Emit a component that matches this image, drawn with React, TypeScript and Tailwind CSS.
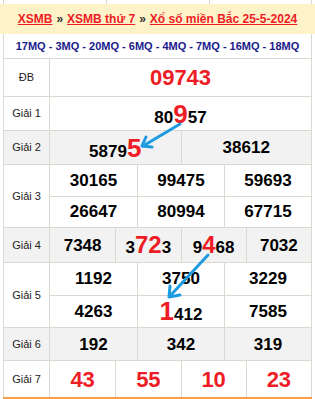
import React from "react";

const RED = "text-[#ee1c25]";

type Cell = React.ReactNode;

function Num({ children, big = false }: { children: React.ReactNode; big?: boolean }) {
  return (
    <span className={big ? `${RED} text-[26px] leading-none` : ""}>{children}</span>
  );
}

function Row({
  label,
  gray = false,
  h,
  children,
}: {
  label: string;
  gray?: boolean;
  h: string;
  children: React.ReactNode;
}) {
  return (
    <div className={`flex border-b border-[#dcd7d0] ${h} ${gray ? "bg-[#f2f2f2]" : "bg-white"}`}>
      <div className="flex w-[45px] shrink-0 items-center justify-center text-[11px] text-[#222]">
        {label}
      </div>
      <div className="flex flex-1 flex-col border-l border-[#dcd7d0]">{children}</div>
    </div>
  );
}

function Line({ cells, cls, className = "" }: { cells: Cell[]; cls: string; className?: string }) {
  return (
    <div className={`grid flex-1 ${cls} ${className}`}>
      {cells.map((c, i) => (
        <div
          key={i}
          className={`flex items-center justify-center text-[17px] font-bold text-black ${
            i > 0 ? "border-l border-[#dcd7d0]" : ""
          }`}
        >
          <span className="leading-none">{c}</span>
        </div>
      ))}
    </div>
  );
}

export default function App() {
  return (
    <div className="relative h-[399px] w-[315px] overflow-hidden bg-white font-['Liberation_Sans',Arial,sans-serif]">
      {/* tail of the table above */}
      <div className="mx-[3px] grid h-[4px] grid-cols-3 border-x border-[#dcd7d0]">
        <div />
        <div className="border-l border-[#dcd7d0]" />
        <div className="border-l border-[#dcd7d0]" />
      </div>

      <div className="flex h-[30px] items-center justify-center bg-[#fdf2c8] text-[12px] font-bold">
        <a className={`${RED} underline`}>XSMB</a>
        <span className="mx-[4px] text-[#333]">»</span>
        <a className={`${RED} underline`}>XSMB thứ 7</a>
        <span className="mx-[4px] text-[#333]">»</span>
        <a className={`${RED} underline`}>Xổ số miền Bắc 25-5-2024</a>
      </div>

      <div className="mx-[3px] border-x border-[#dcd7d0]">
        <div className="flex h-[25px] items-center justify-center border-b border-[#dcd7d0] text-[11px] font-bold text-[#1a1a8c]">
          17MQ - 3MQ - 20MQ - 6MQ - 4MQ - 7MQ - 16MQ - 18MQ
        </div>

        <Row label="ĐB" h="h-[38px]">
          <div className="flex flex-1 items-center justify-center text-[22px] font-bold text-[#ee1c25]">
            09743
          </div>
        </Row>

        <Row label="Giải 1" h="h-[34px]">
          <Line
            cls="grid-cols-1"
            cells={[
              <>
                80<Num big>9</Num>57
              </>,
            ]}
          />
        </Row>

        <Row label="Giải 2" gray h="h-[34px]">
          <Line
            cls="grid-cols-2"
            cells={[
              <>
                5879<Num big>5</Num>
              </>,
              "38612",
            ]}
          />
        </Row>

        <Row label="Giải 3" h="h-[63px]">
          <Line cls="grid-cols-3" className="border-b border-[#dcd7d0]" cells={["30165", "99475", "59693"]} />
          <Line cls="grid-cols-3" cells={["26647", "80994", "67715"]} />
        </Row>

        <Row label="Giải 4" gray h="h-[35px]">
          <Line
            cls="grid-cols-4"
            cells={[
              "7348",
              <>
                3<span className={`${RED} text-[24px] leading-none`}>72</span>3
              </>,
              <>
                9<span className={`${RED} text-[24px] leading-none`}>4</span>68
              </>,
              "7032",
            ]}
          />
        </Row>

        <Row label="Giải 5" h="h-[65px]">
          <Line cls="grid-cols-3" className="border-b border-[#dcd7d0]" cells={["1192", "3750", "3229"]} />
          <Line
            cls="grid-cols-3"
            cells={[
              "4263",
              <>
                <Num big>1</Num>412
              </>,
              "7585",
            ]}
          />
        </Row>

        <Row label="Giải 6" gray h="h-[33px]">
          <Line cls="grid-cols-3" cells={["192", "342", "319"]} />
        </Row>

        <div className="flex h-[36px] bg-white">
          <div className="flex w-[45px] shrink-0 items-center justify-center text-[11px] text-[#222]">
            Giải 7
          </div>
          <div className="grid flex-1 grid-cols-4 border-l border-[#dcd7d0]">
            {["43", "55", "10", "23"].map((n, i) => (
              <div
                key={n}
                className={`flex items-center justify-center text-[22px] font-bold text-[#ee1c25] ${
                  i > 0 ? "border-l border-[#dcd7d0]" : ""
                }`}
              >
                {n}
              </div>
            ))}
          </div>
        </div>
      </div>
      <div className="mx-[3px] h-[2px] bg-[#f5a04c]" />

      {/* hand-drawn arrows */}
      <svg className="pointer-events-none absolute left-0 top-0" width="315" height="399">
        <g stroke="#1e9be0" strokeWidth="3" strokeLinecap="round" strokeLinejoin="round" fill="none">
          <path d="M180 124 L143 146" />
          <path d="M146 137 L142 146 L152 147" />
          <path d="M208 255 L170 296" />
          <path d="M170 286 L169 297 L180 295" />
        </g>
      </svg>
    </div>
  );
}
